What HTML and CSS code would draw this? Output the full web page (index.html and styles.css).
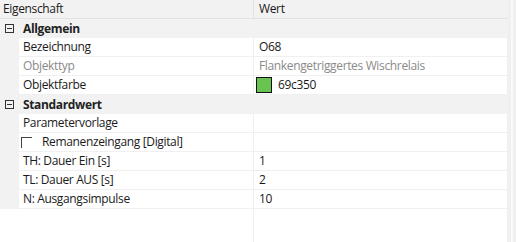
FILE: index.html
```html
<!DOCTYPE html>
<html>
    <head>
        <meta charset="utf-8">
        <title>Eigenschaften</title>
        <link rel="stylesheet" href="styles.css">
    </head>
    <body>
        <div class="frame">
            <div class="grid">
                <div class="head">
                    <div class="col-name">Eigenschaft</div>
                    <div class="col-value">Wert</div>
                </div>

                <div class="cat">
                    <span class="toggle"></span>
                    <span class="cat-title">Allgemein</span>
                </div>
                <div class="row">
                    <div class="name">Bezeichnung</div>
                    <div class="value">O68</div>
                </div>
                <div class="row muted">
                    <div class="name">Objekttyp</div>
                    <div class="value">Flankengetriggertes Wischrelais</div>
                </div>
                <div class="row">
                    <div class="name">Objektfarbe</div>
                    <div class="value"><span class="swatch"></span>69c350</div>
                </div>

                <div class="cat">
                    <span class="toggle"></span>
                    <span class="cat-title">Standardwert</span>
                </div>
                <div class="row">
                    <div class="name">Parametervorlage</div>
                    <div class="value"></div>
                </div>
                <div class="row">
                    <div class="name"><span class="check"></span>Remanenzeingang [Digital]</div>
                    <div class="value"></div>
                </div>
                <div class="row">
                    <div class="name">TH: Dauer Ein [s]</div>
                    <div class="value">1</div>
                </div>
                <div class="row">
                    <div class="name">TL: Dauer AUS [s]</div>
                    <div class="value">2</div>
                </div>
                <div class="row">
                    <div class="name">N: Ausgangsimpulse</div>
                    <div class="value">10</div>
                </div>
                <div class="rest">
                    <div class="col-name"></div>
                    <div class="col-value"></div>
                </div>
            </div>
            <div class="scroll"></div>
        </div>
    </body>
</html>
```

FILE: styles.css
```css
html, body {
    margin: 0;
    height: 100%;
    background-color: #fff;
}

body {
    font-family: "Open Sans", "Noto Sans", sans-serif;
    font-size: 12px;
    letter-spacing: -0.35px;
    color: #1a1a1a;
}

.frame {
    display: flex;
    height: 242px;
}

.grid {
    width: 507px;
    display: flex;
    flex-direction: column;
}

.scroll {
    flex: 1;
    background-color: #f0f0f0;
    border-left: 4px solid #f0f0f0;
    box-shadow: inset 2px 0 0 #fafafa;
}

.head {
    display: flex;
    height: 18px;
    line-height: 18px;
    background-color: #f2f2f2;
    border-bottom: 1px solid #e2e2e2;
}

.head .col-name {
    width: 250px;
    padding-left: 3px;
    border-right: 1px solid #e2e2e2;
}

.head .col-value {
    flex: 1;
    padding-left: 5px;
}

.cat {
    display: flex;
    align-items: center;
    height: 19px;
    background-color: #f2f2f2;
}

.toggle {
    position: relative;
    width: 7px;
    height: 7px;
    margin-left: 5px;
    border: 1px solid #333;
}

/* minus sign inside the expander box */
.toggle::after {
    content: "";
    position: absolute;
    left: 1px;
    right: 1px;
    top: 3px;
    height: 1px;
    background-color: #333;
}

.cat-title {
    margin-left: 9px;
    font-weight: bold;
    color: #222;
}

.row {
    display: flex;
    height: 19px;
    line-height: 18px;
    background-color: #f2f2f2;
}

.row .name {
    display: flex;
    align-items: center;
    width: 230px;
    margin-left: 19px;
    padding-left: 4px;
    background-color: #fff;
    border-bottom: 1px solid #f0f0f0;
    border-right: 1px solid #f0f0f0;
}

.row .value {
    display: flex;
    align-items: center;
    flex: 1;
    padding-left: 5px;
    background-color: #fff;
    border-bottom: 1px solid #f0f0f0;
}

.row.muted {
    color: #8a8a8a;
}

.swatch {
    width: 14px;
    height: 14px;
    margin-left: -3px;
    margin-right: 6px;
    background-color: #69c350;
    border: 1px solid #111;
}

.check {
    width: 10px;
    height: 10px;
    margin-left: -2px;
    margin-right: 10px;
    border-top: 1px solid #444;
    border-left: 1px solid #444;
}

.rest {
    flex: 1;
    display: flex;
}

.rest .col-name {
    width: 253px;
    border-right: 1px solid #f0f0f0;
}
```
